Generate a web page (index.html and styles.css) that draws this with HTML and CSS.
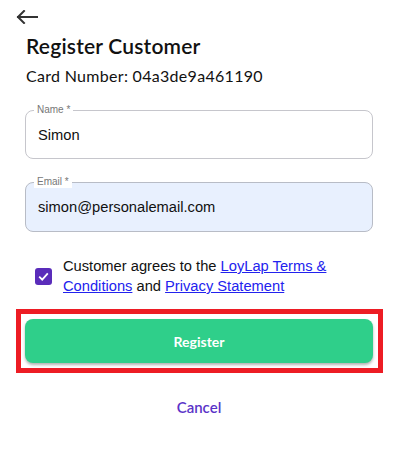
FILE: index.html
```html
<!DOCTYPE html>
<html>
<head>
<meta charset="utf-8">
<link rel="stylesheet" href="styles.css">
</head>
<body>
<div class="page">
  <button class="back" aria-label="Back">
    <svg width="22" height="14" viewBox="0 0 22 14"><path d="M21 7H2M8 1L2 7l6 6" fill="none" stroke="#333" stroke-width="2" stroke-linecap="square"/></svg>
  </button>
  <h1 class="title">Register Customer</h1>
  <p class="card">Card Number: 04a3de9a461190</p>
  <div class="field">
    <span class="label">Name *</span>
    <div class="input">Simon</div>
  </div>
  <div class="field">
    <span class="label">Email *</span>
    <div class="input filled">simon@personalemail.com</div>
  </div>
  <div class="agree">
    <span class="check">
      <svg width="11" height="9" viewBox="0 0 11 9"><path d="M1.2 4.6l3 3 5.6-6.2" fill="none" stroke="#fff" stroke-width="1.8"/></svg>
    </span>
    <p class="agree-text">Customer agrees to the <a href="#">LoyLap Terms &amp; Conditions</a> and <a href="#">Privacy Statement</a></p>
  </div>
  <div class="highlight">
    <button class="register">Register</button>
  </div>
  <div class="cancel-row"><button class="cancel">Cancel</button></div>
</div>
</body>
</html>
```
FILE: styles.css
```css
html, body { margin: 0; padding: 0; background: #fff; }
.page { padding: 8px 46px 0 25px; font-family: "Lato", "Open Sans", sans-serif; color: #111; }
.back { display: block; border: 0; background: none; padding: 0; margin: 2px 0 0 -9px; width: 22px; height: 14px; }
.back svg { display: block; }
.title { font-size: 21px; font-weight: 600; margin: 8px 0 0 1px; line-height: 28px; letter-spacing: 0.2px; }
.card { font-size: 16px; margin: 6px 0 0 1px; line-height: 20px; letter-spacing: 0.3px; }
.field { position: relative; margin-top: 24px; }
.field + .field { margin-top: 23px; }
.label { position: absolute; left: 9px; top: -7px; padding: 0 3px; background: #fff; font: 10px/13px "Liberation Sans", Arial, sans-serif; color: #777; }
.input { border: 1px solid #c6c6cc; border-radius: 8px; box-sizing: border-box; height: 49px; padding: 0 12px; display: flex; align-items: center; font: 14.7px "Liberation Sans", Arial, sans-serif; color: #111; }
.input.filled { background: #e8f0fe; border-color: #b8bcc6; height: 50px; }
.agree { display: flex; align-items: center; gap: 11px; margin: 24px 0 0 10px; }
.check { width: 17px; height: 17px; border-radius: 3px; background: #5a2cba; display: flex; align-items: center; justify-content: center; flex: none; }
.agree-text { margin: 0; font: 14.7px/20px "Liberation Sans", Arial, sans-serif; color: #111; }
.agree-text a { color: #2222ee; }
.highlight { margin: 13px 0 0 -9px; width: 367px; box-sizing: border-box; border: 5px solid #ed1c24; padding: 5px 5px 5px 4px; }
.register { display: block; width: 348px; height: 44px; border: 0; border-radius: 8px; background: #2fcf8a; color: #fff; font: 700 14px "Lato", sans-serif; box-shadow: 0 2px 3px rgba(0,0,0,0.3); }
.cancel-row { display: flex; justify-content: center; margin: 25px 0 0 0; width: 348px; }
.cancel { border: 0; background: none; color: #5a33c8; font: 600 15px "Lato", sans-serif; padding: 0; }
```
